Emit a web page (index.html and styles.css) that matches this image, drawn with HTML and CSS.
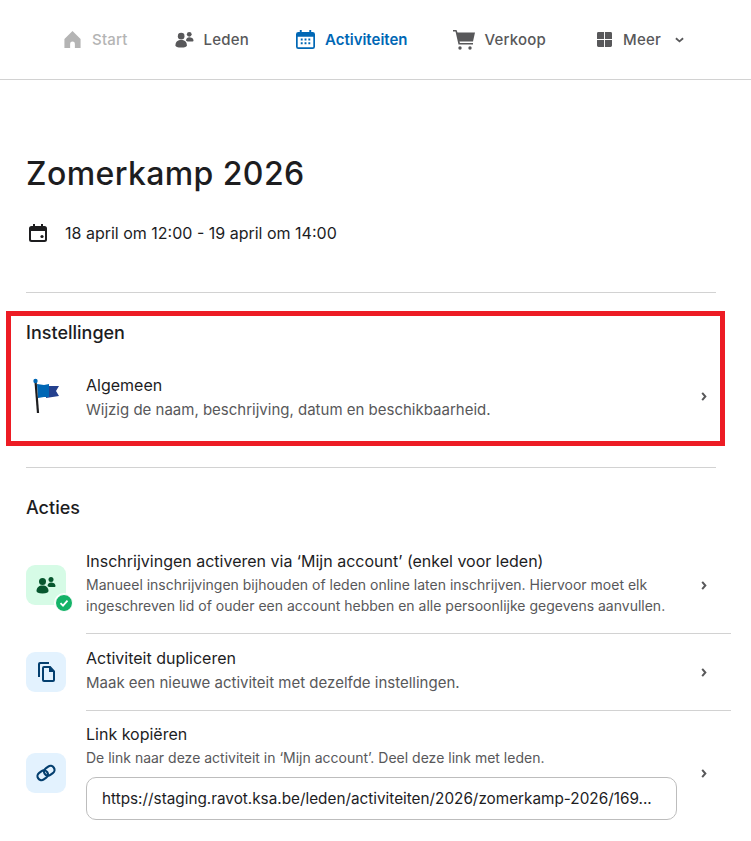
FILE: index.html
```html
<!DOCTYPE html>
<html lang="nl">
<head>
  <meta charset="UTF-8">
  <title>Zomerkamp 2026</title>
  <link rel="stylesheet" href="styles.css">
</head>

<body>

  <!-- Top navigation -->
  <nav class="topnav">
    <a class="nav-item nav-start">
      <svg class="nav-icon" viewBox="0 0 20 20"><path d="M10 1 18.500 9.500V19H12.500V14.500a2.500 2.500 0 0 0-5 0V19H1.500V9.500z" fill="currentColor"/></svg>
      Start
    </a>
    <a class="nav-item">
      <svg class="nav-icon" viewBox="0 0 20 20"><circle cx="6.500" cy="6.500" r="3.500" fill="currentColor"/><path d="M0.500 16c0-3.500 2.500-5.500 6-5.500s6 2 6 5.500c0 1.500-2 2.500-6 2.500s-6-1-6-2.500z" fill="currentColor"/><circle cx="15" cy="4.500" r="2.500" fill="currentColor"/><path d="M11.500 11c.2-2 1.500-3.500 3.500-3.500s4.500 1 4.500 3.500c0 .8-.5 1-1.500 1h-5z" fill="currentColor"/></svg>
      Leden
    </a>
    <a class="nav-item nav-active">
      <svg class="nav-icon" viewBox="0 0 20 20"><path d="M4 0h2v2h8V0h2v2h1.500A2.500 2.500 0 0 1 20 4.500v13a2.500 2.500 0 0 1-2.500 2.500h-15A2.500 2.500 0 0 1 0 17.500v-13A2.500 2.500 0 0 1 2.500 2H4zM1.800 7v10.500c0 .4.300.7.700.7h15c.4 0 .7-.3.700-.7V7z" fill="currentColor" fill-rule="evenodd"/><path d="M5 9h2v2H5zm4 0h2v2H9zm4 0h2v2h-2zm-8 4h2v2H5zm4 0h2v2H9zm4 0h2v2h-2z" fill="currentColor"/></svg>
      Activiteiten
    </a>
    <a class="nav-item nav-shop">
      <svg class="nav-icon nav-icon-cart" viewBox="0 0 22 20"><path d="M0 0h3.500l1 2.500H22l-2 9H6.500l.4 1.500H20v1.500H5.500L2.500 1.500H0z" fill="currentColor"/><circle cx="7" cy="18" r="1.700" fill="currentColor"/><circle cx="17" cy="18" r="1.700" fill="currentColor"/></svg>
      Verkoop
    </a>
    <a class="nav-item nav-more">
      <svg class="nav-icon nav-icon-grid" viewBox="0 0 16 16"><path d="M1.500 0h6v7.500H0V1.500A1.500 1.500 0 0 1 1.500 0zm7 0h6A1.500 1.500 0 0 1 16 1.500v6H8.500zM0 8.500h7.500V16h-6A1.500 1.500 0 0 1 0 14.500zm8.500 0H16v6a1.500 1.500 0 0 1-1.500 1.500h-6z" fill="currentColor"/></svg>
      Meer
      <svg class="nav-caret" viewBox="0 0 10 6"><path d="M1 1l4 3.500L9 1" fill="none" stroke="currentColor" stroke-width="2"/></svg>
    </a>
  </nav>

  <main class="content">
    <h1>Zomerkamp 2026</h1>

    <div class="date-line">
      <svg class="date-icon" viewBox="0 0 20 20"><path d="M5 1h2v2h6V1h2v2h1.500A2.500 2.500 0 0 1 19 5.500v11a2.500 2.500 0 0 1-2.500 2.500h-13A2.500 2.500 0 0 1 1 16.500v-11A2.500 2.500 0 0 1 3.500 3H5zM3 8v8.500c0 .3.200.5.500.5h13c.3 0 .5-.2.500-.5V8z" fill="#1d1d1f" fill-rule="evenodd"/><circle cx="14" cy="13.500" r="1.600" fill="#1d1d1f"/></svg>
      18 april om 12:00 - 19 april om 14:00
    </div>

    <hr class="divider">

    <section class="section section-settings">
      <h2>Instellingen</h2>
      <div class="row row-plain">
        <svg class="flag" viewBox="0 0 28 36"><path d="M14 8h13l-3 5 3 5-13 2z" fill="#24408e"/><path d="M5 6l7 1 5-1v13h-5l-6 1z" fill="#0067b5"/><path d="M3.500 3 6 35" fill="none" stroke="#1d1d1f" stroke-width="2.200"/><circle cx="3.500" cy="3" r="2.200" fill="#0067b5"/></svg>
        <div class="row-text">
          <div class="row-title">Algemeen</div>
          <div class="row-desc row-desc-large">Wijzig de naam, beschrijving, datum en beschikbaarheid.</div>
        </div>
        <svg class="chevron" viewBox="0 0 6 10"><path d="M1 1l3.500 4L1 9" fill="none" stroke="currentColor" stroke-width="2.200"/></svg>
      </div>
    </section>

    <hr class="divider">

    <section class="section section-actions">
      <h2>Acties</h2>

      <div class="row row-first">
        <div class="tile tile-green">
          <svg class="tile-icon" viewBox="0 0 20 20"><circle cx="6.500" cy="6.500" r="3.500" fill="currentColor"/><path d="M0.500 16c0-3.500 2.500-5.500 6-5.500s6 2 6 5.500c0 1.500-2 2.500-6 2.500s-6-1-6-2.500z" fill="currentColor"/><circle cx="15" cy="4.500" r="2.500" fill="currentColor"/><path d="M11.500 11c.2-2 1.500-3.500 3.500-3.500s4.500 1 4.500 3.500c0 .8-.5 1-1.500 1h-5z" fill="currentColor"/></svg>
          <span class="tile-check">
            <svg viewBox="0 0 12 12"><path d="M2.500 6.200 5 8.700l4.500-5" fill="none" stroke="#fff" stroke-width="1.800"/></svg>
          </span>
        </div>
        <div class="row-text">
          <div class="row-title">Inschrijvingen activeren via ‘Mijn account’ (enkel voor leden)</div>
          <div class="row-desc">Manueel inschrijvingen bijhouden of leden online laten inschrijven. Hiervoor moet elk ingeschreven lid of ouder een account hebben en alle persoonlijke gegevens aanvullen.</div>
        </div>
        <svg class="chevron" viewBox="0 0 6 10"><path d="M1 1l3.500 4L1 9" fill="none" stroke="currentColor" stroke-width="2.200"/></svg>
      </div>

      <div class="row row-short">
        <div class="tile">
          <svg class="tile-icon" viewBox="0 0 20 20"><path d="M4 0h9v2H4.500a.5.5 0 0 0-.5.500V15H2V2a2 2 0 0 1 2-2z" fill="currentColor"/><path d="M8 4h6.500L19 9v9a2 2 0 0 1-2 2H8a2 2 0 0 1-2-2V6a2 2 0 0 1 2-2zm0 2v12h9V10h-4V6z" fill="currentColor" fill-rule="evenodd"/></svg>
        </div>
        <div class="row-text">
          <div class="row-title">Activiteit dupliceren</div>
          <div class="row-desc row-desc-large">Maak een nieuwe activiteit met dezelfde instellingen.</div>
        </div>
        <svg class="chevron" viewBox="0 0 6 10"><path d="M1 1l3.500 4L1 9" fill="none" stroke="currentColor" stroke-width="2.200"/></svg>
      </div>

      <div class="row row-link">
        <div class="tile">
          <svg class="tile-icon" viewBox="0 0 20 20"><g fill="none" stroke="currentColor" stroke-width="2.200" transform="rotate(-35 10 10)"><rect x="0.500" y="6" width="11" height="8" rx="4"/><rect x="8.500" y="6" width="11" height="8" rx="4"/></g></svg>
        </div>
        <div class="row-text">
          <div class="row-title">Link kopiëren</div>
          <div class="row-desc">De link naar deze activiteit in ‘Mijn account’. Deel deze link met leden.</div>
          <div class="link-box"><span>https://staging.ravot.ksa.be/leden/activiteiten/2026/zomerkamp-2026/169...</span></div>
        </div>
        <svg class="chevron" viewBox="0 0 6 10"><path d="M1 1l3.500 4L1 9" fill="none" stroke="currentColor" stroke-width="2.200"/></svg>
      </div>
    </section>
  </main>

  <!-- Red marker drawn over the settings block -->
  <div class="marker"></div>

</body>
</html>
```

FILE: styles.css
```css
* {
  box-sizing: border-box;
}

body {
  margin: 0;
  height: 841px;
  overflow: hidden;
  position: relative;
  background: #fff;
  color: #1d1d1f;
  font-family: Inter, "Open Sans", sans-serif;
}

.topnav {
  height: 80px;
  border-bottom: 1px solid #d2d2d2;
  display: flex;
  align-items: center;
  justify-content: center;
  gap: 47px;
  padding-right: 4px;
}

.nav-item {
  display: flex;
  align-items: center;
  gap: 10px;
  font-size: 15px;
  font-weight: 500;
  letter-spacing: 0.2px;
  color: #58585a;
}

.nav-start {
  color: #b4b4b4;
}

.nav-active {
  color: #0067b5;
  font-weight: 600;
  letter-spacing: 0;
}

.nav-shop {
  margin-left: -2px;
}

.nav-more {
  margin-left: 4px;
}

.nav-icon {
  width: 19px;
  height: 19px;
}

.nav-icon-cart {
  width: 22px;
  height: 20px;
}

.nav-icon-grid {
  width: 15px;
  height: 15px;
  margin-right: 1px;
}

.nav-caret {
  width: 9px;
  height: 6px;
  margin-left: 4px;
}

.content {
  padding: 0 20px 0 26px;
}

h1 {
  margin: 74px 0 0;
  font-size: 32px;
  line-height: 40px;
  font-weight: 500;
  letter-spacing: 0.4px;
}

.date-line {
  display: flex;
  align-items: center;
  gap: 17px;
  margin-top: 27px;
  font-size: 16px;
  line-height: 24px;
  height: 24px;
}

.date-icon {
  width: 20px;
  height: 20px;
  margin-left: 2px;
}

.divider {
  border: 0;
  border-top: 1px solid #d2d2d2;
  margin: 0 15px 0 0;
}

.date-line + .divider {
  margin-top: 47px;
}

h2 {
  margin: 0;
  font-size: 18px;
  line-height: 24px;
  font-weight: 500;
}

.section-settings {
  padding-top: 28px;
  height: 174px;
}

.section-actions {
  padding-top: 28px;
}

.row {
  display: flex;
  align-items: center;
  position: relative;
}

.row-plain {
  margin-top: 24px;
  height: 54px;
}

.flag {
  width: 28px;
  height: 36px;
  margin-left: 6px;
  margin-right: 26px;
  flex: none;
}

.row-text {
  flex: none;
  width: 600px;
}

.row-title {
  font-size: 16px;
  line-height: 24px;
  color: #1d1d1f;
}

.row-desc {
  font-size: 14px;
  line-height: 21px;
  color: #58585a;
}

.row-desc-large {
  font-size: 15px;
  margin-top: 2px;
}

.chevron {
  width: 6px;
  height: 9px;
  margin-left: 15px;
  color: #58585a;
  flex: none;
}

.row-first {
  margin-top: 16px;
  height: 98px;
}

.row-first .row-text {
  margin-bottom: 5px;
}

.row-first .row-title {
  margin-bottom: 1px;
}

.row-short {
  height: 77px;
}

.row-short .row-text {
  margin-bottom: 6px;
}

.row-short .tile,
.row-link .tile {
  margin-bottom: 1px;
}

.row-link {
  height: 125px;
}

.row-link .row-text {
  margin-bottom: 5px;
}

.row-link .row-desc {
  margin-top: 1px;
}

/* rule under an action row starts at the text column */
.row-first::after,
.row-short::after {
  content: "";
  position: absolute;
  left: 60px;
  right: 0;
  bottom: 0;
  border-bottom: 1px solid #d2d2d2;
}

.tile {
  width: 40px;
  height: 40px;
  margin-right: 20px;
  border-radius: 9px;
  background: #e3f2fe;
  color: #043f6f;
  display: flex;
  align-items: center;
  justify-content: center;
  position: relative;
  flex: none;
}

.tile-green {
  background: #d6fbe6;
  color: #07572e;
}

.tile-icon {
  width: 20px;
  height: 20px;
}

.tile-check {
  position: absolute;
  right: -7px;
  bottom: -7px;
  width: 18px;
  height: 18px;
  border-radius: 50%;
  background: #14b368;
  border: 1px solid #fff;
  box-shadow: 0 0 0 1px #fff;
  display: flex;
  align-items: center;
  justify-content: center;
}

.tile-check svg {
  width: 12px;
  height: 12px;
}

.link-box {
  margin-top: 9px;
  width: 591px;
  height: 43px;
  border: 1px solid #bdbdbd;
  border-radius: 10px;
  padding: 0 15px;
  font-size: 15.3px;
  line-height: 41px;
  white-space: nowrap;
  overflow: hidden;
}

.marker {
  position: absolute;
  left: 6px;
  top: 311px;
  width: 719px;
  height: 135px;
  border: 5px solid #ed1c24;
  pointer-events: none;
}
```
